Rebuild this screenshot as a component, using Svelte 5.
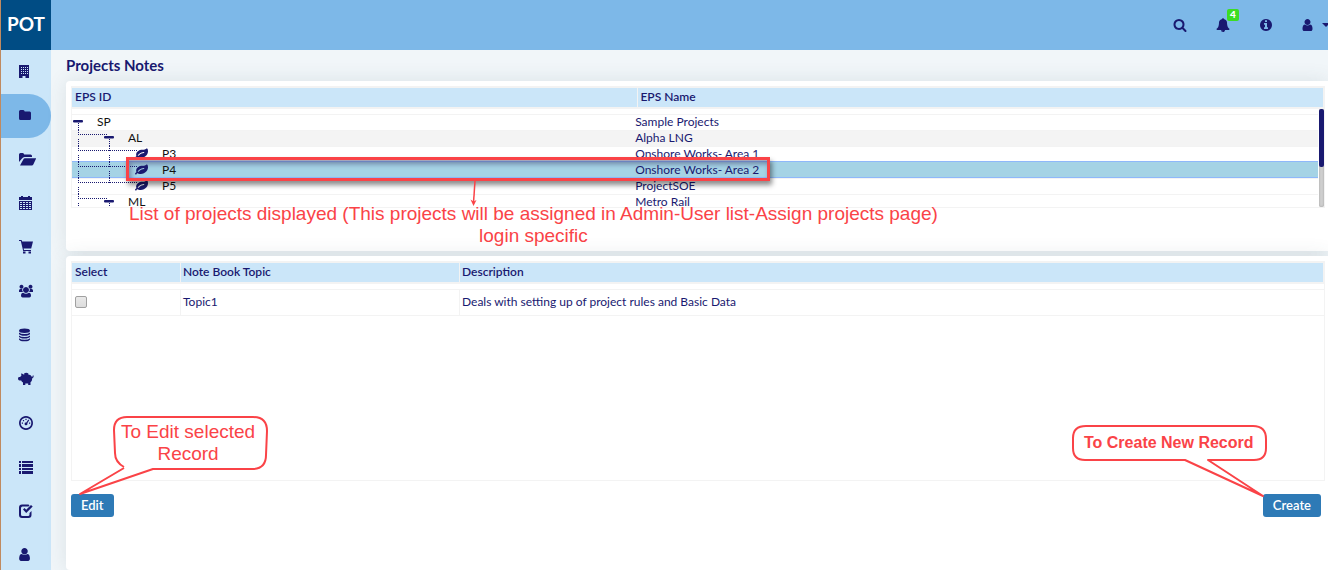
<script>
  const FA = '0 0 1792 1792';
  const userPath = 'M1536 1399q0 109-62.5 187t-150.5 78h-854q-88 0-150.5-78t-62.5-187q0-85 8.5-160.5t31.5-152 58.5-131 94-89 134.5-34.5q131 128 313 128t313-128q76 0 134.5 34.5t94 89 58.5 131 31.5 152 8.5 160.5zm-256-887q0 159-112.5 271.5t-271.5 112.5-271.5-112.5-112.5-271.5 112.5-271.5 271.5-112.5 271.5 112.5 112.5 271.5z';
  const leafPath = 'M1280 704q0-26-19-45t-45-19q-172 0-318 49.5t-259.5 134-235.5 219.5q-19 21-19 45 0 26 19 45t45 19q24 0 45-19 27-24 74-71t67-66q137-124 268.5-176t313.5-52q26 0 45-19t19-45zm512-198q0 95-20 193-46 224-184.5 383t-357.5 268q-214 108-438 108-148 0-286-47-15-5-88-42t-96-37q-16 0-39.5 32t-45 70-52.5 70-60 32q-43 0-63.5-17.5t-45.5-59.5q-2-4-6-11t-5.5-10-3-9.5-1.5-13.5q0-35 31-73.5t68-65.5 68-56 31-48q0-4-14-38t-16-44q-9-51-9-104 0-115 43.5-220t119-184.5 170.5-139 204-95.5q55-18 145-25.5t179.5-9 178.5-6 163.5-24 113.5-56.5l29.5-29.5 29.5-28 27-20 36.5-16 43.5-4.5q39 0 70.5 46t47.5 112 24 124 8 96z';

  const menu = [
    { label: 'Organisation', box: '0 0 16 16', d: 'M1 2h10v13h-3.500v-2h-3v2H1zM3 4v1h1v-1zM5 4v1h1v-1zM7 4v1h1v-1zM9 4v1h1v-1zM3 6v1h1v-1zM5 6v1h1v-1zM7 6v1h1v-1zM9 6v1h1v-1zM3 8v1h1v-1zM5 8v1h1v-1zM7 8v1h1v-1zM9 8v1h1v-1zM3 10v1h1v-1zM5 10v1h1v-1zM7 10v1h1v-1zM9 10v1h1v-1z' },
    { label: 'Projects', active: true, box: '0 0 16 16', d: 'M1 4.500Q1 3 2.500 3h2.700Q6.500 3 6.700 4.500h5Q13 4.500 13 6v5.500Q13 13 11.700 13H2.500Q1 13 1 11.500z' },
    { label: 'Open projects', box: '0 0 18 16', d: 'M1 11V3.500Q1 2 2.500 2h2.200Q6 2 6.200 3.500h6.300Q14 3.500 14 5v1H6.500Q5 6 4 7.500zM2 14.500L5.300 8.400Q5.800 7.200 7 7.200h11.200L15.300 13.400Q14.900 14.500 13.700 14.500z' },
    { label: 'Calendar', box: '0 0 16 16', d: 'M1 2h2V1h2v1h5V1h2v1h2v3H1zM1 6h13v9H1zM2 7v1h2V7zM5 7v1h2V7zM8 7v1h2V7zM11 7v1h2V7zM2 9v1h2V9zM5 9v1h2V9zM8 9v1h2V9zM11 9v1h2V9zM2 11v1h2v-1zM5 11v1h2v-1zM8 11v1h2v-1zM11 11v1h2v-1zM2 13v1h2v-1zM5 13v1h2v-1zM8 13v1h2v-1zM11 13v1h2v-1z' },
    { label: 'Purchasing', box: '0 0 16 16', d: 'M1 1h2.600l.5 1.500H15L13.200 9.500H5.600L6 11h7v1H5.200L2.800 2H1zM5 12.500h2.500V14.500H5zM10.500 12.500H13V14.500h-2.500z' },
    { label: 'Teams', box: '0 0 16 16', d: 'M8 4a3 3 0 1 1-.01 0zM3.500 1.700a2 2 0 1 1-.01 0zM12.500 1.700a2 2 0 1 1-.01 0zM1 9V7.500Q1 6 2.300 6h1.900Q4 8 5 9zM15 9V7.500Q15 6 13.700 6h-1.900Q12 8 11 9zM3 12.700Q3 9.700 5.200 9.700 6.500 10.700 8 10.700T10.800 9.700Q13 9.700 13 12.700 13 14.500 11.300 14.500H4.700Q3 14.500 3 12.700z' },
    { label: 'Data', box: '0 0 16 16', d: 'M6.500 1.500c3.500 0 5.500.9 5.500 2.200S10 6 6.500 6 1 5 1 3.700 3 1.500 6.500 1.500zM1 5.500q1.500 1.500 5.500 1.500T12 5.500V7Q11 8.800 6.500 8.800T1 7zM1 8.400q1.500 1.500 5.500 1.500T12 8.400v1.400q-1 1.800-5.500 1.800T1 9.800zM1 11.200q1.500 1.500 5.500 1.500T12 11.200v1.200q-1 1.900-5.500 1.900T1 12.400z' },
    { label: 'Budget', box: '0 0 16 16', d: 'M6 2.500Q8 1.200 10.500 2.400L10 3.300Q13.300 4 14 6q.8-.3.700-1.500h1Q16 6.700 14.300 7.300 14.200 10 12.500 11.300V14h-2.300v-1.500H7.300V14H5v-2.500Q3.700 10.800 3.200 9.500H1.500Q0 9.500 0 7.500q0-1.600 1-1.600h1.300Q2.700 5 3.500 4.500L3 2.500q1.500 0 2.500 1Q6 3.400 6.500 3.300z' },
    { label: 'Dashboard', box: '0 0 16 16', d: 'M8 1a7 7 0 1 1-.01 0zM8 2.700a5.300 5.300 0 1 0 .01 0zM7.400 3.700h1.200v1.200H7.400zM4.900 5h1.200v1.200H4.900zM3.800 7.500H5v1.200H3.800zM11 7.500h1.200v1.200H11zM10.300 4.500l.9.700L9.300 8.300a1.400 1.400 0 1 1-1-.8z' },
    { label: 'Lists', box: '0 0 16 16', d: 'M1 2h2v2H1zM1 5h2v3H1zM1 9h2v2H1zM1 12h2v3H1zM4 2h11v2H4zM4 5h11v3H4zM4 9h11v2H4zM4 12h11v3H4z' },
    { label: 'Approvals', box: '0 0 16 16', d: 'M4 1.500H10.500L11.500 2.500 10.500 3.500H4.500Q3 3.500 3 5v6.500Q3 13 4.500 13h5.500q1.500 0 1.500-1.500V10l2-2v4q0 3-3 3H4q-3 0-3-3V4.500q0-3 3-3zM5 6.500L6.500 5 8.200 6.800 13 2l1.700 1.500L8.200 10z' },
    { label: 'Users', box: '120 0 1900 1900', d: userPath }
  ];

  // from: guide columns entering from the row above; to: guide columns continuing below
  const projects = [
    { id: 'SP', name: 'Sample Projects', icon: 1, indent: 25, from: [], to: [6], reach: 0 },
    { id: 'AL', name: 'Alpha LNG', icon: 32, indent: 56, from: [6], to: [6, 37], reach: 36, shade: true },
    { id: 'P3', name: 'Onshore Works- Area 1', indent: 90, from: [6, 37], to: [6, 37], reach: 66 },
    { id: 'P4', name: 'Onshore Works- Area 2', indent: 90, from: [6, 37], to: [6, 37], reach: 66 },
    { id: 'P5', name: 'ProjectSOE', indent: 90, from: [6, 37], to: [6], reach: 66 },
    { id: 'ML', name: 'Metro Rail', icon: 32, indent: 56, from: [6], to: [6, 37], reach: 36 }
  ];
  let selected = $state('P4');
  let picked = $state(false);
</script>

<div class="app">
  <aside>
    <a class="logo" href="#home">POT</a>
    <nav aria-label="Main">
      {#each menu as item}
        <a href="#menu" class:active={item.active} aria-label={item.label}>
          <svg viewBox={item.box} width={item.box === '0 0 18 16' ? 18 : 16} height="16"><path fill-rule="evenodd" d={item.d} /></svg>
        </a>
      {/each}
    </nav>
  </aside>

  <div class="page">
    <header>
      <button aria-label="Search"><svg viewBox={FA} width="14" height="14"><path d="M1216 832q0-185-131.500-316.500t-316.500-131.500-316.500 131.500-131.500 316.500 131.500 316.500 316.500 131.500 316.500-131.500 131.500-316.500zm512 832q0 52-38 90t-90 38q-54 0-90-38l-343-342q-179 124-399 124-143 0-273.500-55.500t-225-150-150-225-55.500-273.500 55.500-273.500 150-225 225-150 273.500-55.500 273.500 55.500 225 150 150 225 55.500 273.500q0 220-124 399l343 343q37 37 37 90z" /></svg></button>
      <button aria-label="Notifications" class="bell"><svg viewBox={FA} width="14" height="14"><path d="M912 1696q0-16-16-16-59 0-101.500-42.500t-42.500-101.500q0-16-16-16t-16 16q0 73 51.500 124.500t124.500 51.500q16 0 16-16zm816-288q0 52-38 90t-90 38h-448q0 106-75 181t-181 75-181-75-75-181h-448q-52 0-90-38t-38-90q50-42 91-88t85-119.500 74.500-158.500 50-206 19.500-260q0-152 117-282.500t307-158.500q-8-19-8-39 0-40 28-68t68-28 68 28 28 68q0 20-8 39 190 28 307 158.500t117 282.500q0 139 19.500 260t50 206 74.500 158.500 85 119.500 91 88z" /></svg><span class="badge">4</span></button>
      <button aria-label="Information"><svg viewBox="128 128 1536 1536" width="12" height="12"><path d="M1152 1376v-160q0-14-9-23t-23-9h-96v-512q0-14-9-23t-23-9h-320q-14 0-23 9t-9 23v160q0 14 9 23t23 9h96v320h-96q-14 0-23 9t-9 23v160q0 14 9 23t23 9h448q14 0 23-9t9-23zm-128-896v-160q0-14-9-23t-23-9h-192q-14 0-23 9t-9 23v160q0 14 9 23t23 9h192q14 0 23-9t9-23zm640 416q0 209-103 385.500t-279.500 279.500-385.500 103-385.500-103-279.500-279.500-103-385.500 103-385.500 279.500-279.500 385.500-103 385.500 103 279.500 279.500 103 385.500z" /></svg></button>
      <button aria-label="Account" class="account"><svg viewBox="256 128 1280 1536" width="11" height="12"><path d={userPath} /></svg><svg viewBox="0 0 8 4" width="8" height="4"><path d="M0 0h8L4 4z" /></svg></button>
    </header>

    <main>
      <h1>Projects Notes</h1>

      <section class="card projects">
        <table class="grid tree">
          <thead><tr><th>EPS ID</th><th>EPS Name</th></tr></thead>
          <tbody>
            {#each projects as p}
              <tr class:shade={p.shade} class:selected={selected === p.id} onclick={() => (selected = p.id)}>
                <td class="node">
                  <svg width={p.indent} height="16" aria-hidden="true">
                    <g class="guides">
                      {#each p.from as x}<line x1={x + 0.5} x2={x + 0.5} y1="0" y2="5" />{/each}
                      {#each p.to as x}<line x1={x + 0.5} x2={x + 0.5} y1="9" y2="16" />{/each}
                      {#if p.reach}<line x1="6" x2={p.reach} y1="4.500" y2="4.500" />{/if}
                    </g>
                    {#if p.icon}
                      <rect x={p.icon} y="6" width="10" height="2.500" rx="1" />
                    {:else}
                      <svg x="63" y="2" width="13" height="12" viewBox="0 100 1792 1600"><path d={leafPath} /></svg>
                    {/if}
                  </svg>{p.id}
                </td>
                <td>{p.name}</td>
              </tr>
            {/each}
          </tbody>
        </table>
        <div class="scroll"><div class="thumb"></div></div>

        <div class="frame"></div>
        <div class="caption">List of projects displayed (This projects will be assigned in Admin-User list-Assign projects page)<br />login specific</div>
        <svg class="arrow" width="8" height="26" viewBox="0 0 8 26"><path d="M5 0L3.500 22" fill="none" stroke="#fa4347" stroke-width="1.500" /><path d="M0.500 18.500L3.500 25 6.500 19 3.700 20.500z" fill="#fa4347" /></svg>
      </section>

      <section class="card notes">
        <table class="grid topics">
          <thead><tr><th>Select</th><th>Note Book Topic</th><th>Description</th></tr></thead>
          <tbody>
            <tr>
              <td><input type="checkbox" aria-label="Select Topic1" bind:checked={picked} /></td>
              <td>Topic1</td>
              <td>Deals with setting up of project rules and Basic Data</td>
            </tr>
          </tbody>
        </table>
        <div class="actions"><button>Edit</button><button>Create</button></div>

        <div class="callout edit">
          <svg width="192" height="84" viewBox="0 0 192 84"><path d="M45 52Q36 47 36 38L35 15Q35 2 48 2H174Q188 2 188 16L187 40Q187 54 173 54H74L1 79 45 53" /></svg>
          <span>To Edit selected<br />Record</span>
        </div>
        <div class="callout create">
          <svg width="198" height="76" viewBox="0 0 198 76"><path d="M115 36H15Q3 36 3 24V14Q3 2 16 2H183Q196 2 196 15V24Q196 36 184 36H138L193 72z" /></svg>
          <span>To Create New Record</span>
        </div>
      </section>
    </main>
  </div>
</div>

<style>
  :global(body) { background: #f1f6f9; overflow: hidden; }
  .app { display: flex; height: 100vh; overflow: hidden; font-family: Lato, sans-serif; font-size: 12px; color: #191970; }
  svg { fill: #191970; display: block; flex: none; }
  button { font-family: inherit; cursor: pointer; }

  aside { width: 50px; flex: none; border-left: 1px solid #c08a60; background: #cbe6f9; }
  .logo { display: flex; align-items: center; justify-content: center; height: 50px; padding-bottom: 4px; box-sizing: border-box; background: #004c84; color: #fff; font-size: 19px; font-weight: 700; text-decoration: none; }
  nav { display: flex; flex-direction: column; }
  nav a { display: flex; align-items: center; height: 44px; box-sizing: border-box; padding: 0 0 2px 17px; border-radius: 0 22px 22px 0; }
  nav a.active { background: #7db8e8; }

  .page { flex: 1; min-width: 0; display: flex; flex-direction: column; }
  header { display: flex; justify-content: flex-end; flex: none; height: 50px; background: #7db8e8; }
  header button { position: relative; display: flex; align-items: center; justify-content: center; width: 43px; padding: 0 1px 1px 0; box-sizing: border-box; border: 0; background: none; }
  header .account { width: 40px; justify-content: flex-start; gap: 9px; padding-left: 14px; }
  .badge { position: absolute; left: 25px; top: 9px; width: 12px; height: 12px; border-radius: 2px; background: #3cdd22; color: #fff; font-size: 10px; font-weight: 900; line-height: 10px; }

  main { flex: 1; min-height: 0; display: flex; flex-direction: column; gap: 5px; padding-left: 15px; }
  h1 { margin: 0; height: 26px; font-size: 15px; font-weight: 700; line-height: 31px; }
  .card { position: relative; padding: 5px 3px 0 5px; border-radius: 4px 0 0 4px; background: #fff; box-shadow: 0 0 20px rgba(60, 80, 90, 0.12); }
  .projects { height: 165px; flex: none; }
  .notes { flex: 1; }

  .grid { display: flex; flex-direction: column; box-sizing: border-box; border: 1px solid #f3f3f3; }
  thead, tbody { display: block; }
  tr { display: grid; }
  th, td { padding: 0; text-align: left; white-space: nowrap; }
  thead { border: solid #f3f3f3; border-width: 1px 1px 2px 0; }
  th { height: 19px; padding-left: 3px; background: #cbe6f9; line-height: 17px; font-weight: 600; }
  th + th { border-left: 1px solid #f3f3f3; padding-left: 2px; }

  .tree { height: 122px; }
  .tree tr { grid-template-columns: 45.2% 1fr; }
  .tree tbody { overflow: hidden; margin-right: 6px; padding-top: 5px; }
  .tree tbody tr { height: 16px; box-shadow: inset 0 1px #f3f3f3; line-height: 15px; }
  .tree .shade { background: #f4f4f4; }
  .tree tbody .selected { background: #a5d3e5; box-shadow: 0 0 0 1px #8fb8fa, inset 0 -1px #8fb8fa; }
  .node { display: flex; color: #111; }
  .guides { stroke: #191970; stroke-width: 1; stroke-dasharray: 1 1; shape-rendering: crispEdges; }
  .scroll { position: absolute; top: 28px; right: 4px; width: 5px; height: 98px; border-radius: 2px; background: #cecece; box-shadow: inset 0 0 2px #999; }
  .thumb { height: 58px; border-radius: 2px; background: #191970; }

  .topics { height: 220px; }
  .topics tr { grid-template-columns: 108px 279px 1fr; }
  .topics tbody { padding-top: 5px; }
  .topics tbody tr { height: 25px; border: solid #f3f3f3; border-width: 1px 0; line-height: 23px; }
  .topics td { padding-left: 3px; }
  .topics td + td { border-left: 1px solid #f3f3f3; padding-left: 2px; }
  input { appearance: none; display: block; box-sizing: border-box; width: 12px; height: 12px; margin: 6px 0; border: 1px solid #a0a0a0; border-radius: 2px; background: linear-gradient(#e9e9e9, #dcdcdc); }
  input:checked { background: #191970; }

  .actions { display: flex; justify-content: space-between; padding: 13px 4px 0 0; }
  .actions button { height: 23px; padding: 0 10px 2px; border: 0; border-radius: 3px; background: #2e7ab6; color: #fff; font-size: 13px; font-weight: 600; }

  .frame { position: absolute; left: 60px; top: 76px; width: 638px; height: 18px; border: 3px solid #fa4347; box-shadow: 2px 4px 5px rgba(0, 0, 0, 0.45), inset 2px 4px 5px rgba(60, 60, 110, 0.5); pointer-events: none; }
  .caption, .callout { font-family: "Liberation Sans", Arial, sans-serif; color: #fa4347; text-align: center; white-space: nowrap; line-height: 22px; pointer-events: none; }
  .caption { position: absolute; left: 63px; top: 122px; font-size: 19px; }
  .arrow { position: absolute; left: 404px; top: 100px; }
  .callout { position: absolute; }
  .callout svg path { fill: #fff; stroke: #fa4347; stroke-width: 2; stroke-linejoin: round; }
  .callout span { position: absolute; }
  .edit { left: 13px; top: 159px; font-size: 19px; }
  .edit span { left: 42px; top: 6px; }
  .create { right: 60px; top: 168px; font-size: 16px; font-weight: 700; }
  .create span { left: 14px; top: 8px; }
</style>
